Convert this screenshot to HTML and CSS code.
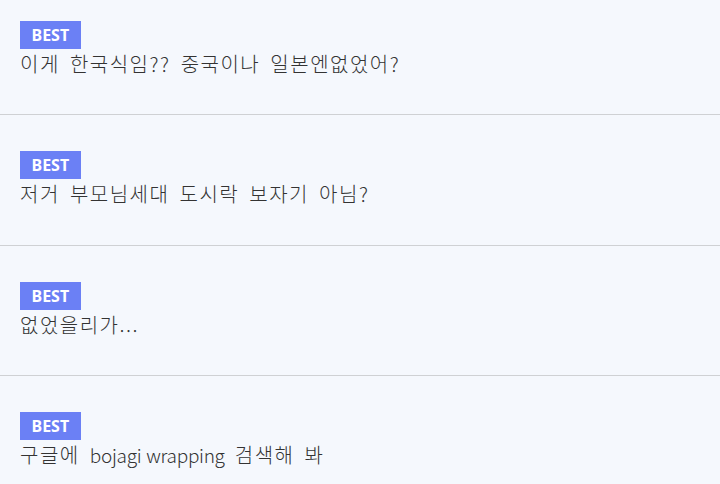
FILE: index.html
```html
<!DOCTYPE html>
<html lang="ko">
<head>
    <meta charset="UTF-8">
    <meta name="viewport" content="width=device-width, initial-scale=1.0">
    <title>베스트 댓글</title>
    <link rel="stylesheet" href="styles.css">
</head>
<body>

    <ul class="comments">
        <li class="comment">
            <span class="badge">BEST</span>
            <p class="text">이게 한국식임?? 중국이나 일본엔없었어?</p>
        </li>
        <li class="comment">
            <span class="badge">BEST</span>
            <p class="text">저거 부모님세대 도시락 보자기 아님?</p>
        </li>
        <li class="comment">
            <span class="badge">BEST</span>
            <p class="text">없었을리가...</p>
        </li>
        <li class="comment">
            <span class="badge">BEST</span>
            <p class="text">구글에 <span class="latin">bojagi wrapping</span> 검색해 봐</p>
        </li>
    </ul>

</body>
</html>
```

FILE: styles.css
```css
body {
    margin: 0;
    background-color: #f5f8fd;
    font-family: "Noto Sans CJK KR", "Noto Sans", sans-serif;
    color: #333;
}
.comments {
    list-style: none;
    margin: 0;
    padding: 0;
}
.comment {
    display: flex;
    flex-direction: column;
    align-items: flex-start;
    padding: 36px 20px 35.5px;
    border-bottom: 1px solid #cfd1d4;
}
.comment:first-child {
    padding-top: 20.5px;
}
.badge {
    display: block;
    height: 28px;
    line-height: 28px;
    padding: 0 11.5px;
    background-color: #6b80f5;
    color: #fff;
    font-family: "Noto Sans", sans-serif;
    font-weight: bold;
    font-size: 16px;
}
.text {
    margin: 0;
    font-size: 20px;
    line-height: 30px;
    font-weight: 300;
    letter-spacing: 1.5px;
    word-spacing: 3px;
}
/* latin words sit tighter than the hangul around them */
.latin {
    font-size: 19px;
    letter-spacing: -0.3px;
    word-spacing: 0;
}
```
